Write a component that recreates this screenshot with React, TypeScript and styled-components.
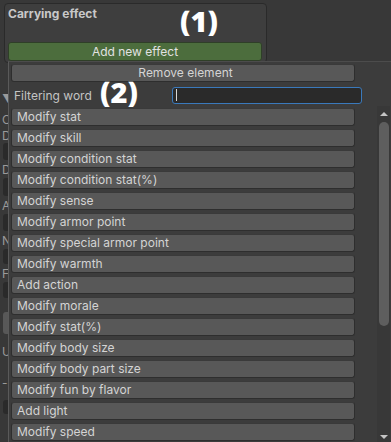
import styled, { createGlobalStyle } from 'styled-components';

const GlobalStyle = createGlobalStyle`
  body {
    margin: 0;
    background: #383838;
    font-family: Inter, 'Noto Sans', sans-serif;
  }
`;

const Screen = styled.div`
  position: relative;
  width: 391px;
  height: 442px;
  overflow: hidden;
  background: #383838;
`;

const TopArea = styled.div`
  height: 61px;
  padding: 3px 0 0 4px;
  box-sizing: border-box;
`;

const Panel = styled.div`
  width: 263px;
  height: 60px;
  box-sizing: border-box;
  border: 1px solid #2a2a2a;
  border-radius: 4px;
  background: #3e3e3e;
  padding: 3px 4px 0 3px;
  display: flex;
  flex-direction: column;
`;

const PanelTitle = styled.div`
  color: #c8c8c8;
  font-size: 12px;
  font-weight: 700;
  line-height: 14px;
  height: 35px;
`;

const GreenButton = styled.div`
  height: 19px;
  box-sizing: border-box;
  background: #4c6d3d;
  border: 1px solid #2f3f28;
  border-radius: 3px;
  color: #e2e2e2;
  font-size: 12px;
  line-height: 17px;
  text-align: center;
`;

const BodyRow = styled.div`
  display: flex;
  height: 381px;
`;

const Backdrop = styled.div`
  width: 8px;
  overflow: hidden;
  display: flex;
  flex-direction: column;
  padding-top: 26px;
`;

const BackRow = styled.div<{ $h: number }>`
  height: ${(p) => p.$h}px;
  display: flex;
  align-items: center;
  color: #9a9a9a;
  font-size: 12px;
  padding-left: 2px;
  white-space: nowrap;
`;

const BackField = styled.div<{ $h: number; $light?: boolean }>`
  height: ${(p) => p.$h}px;
  margin: 2px 0 2px 3px;
  width: 20px;
  border-radius: 3px;
  background: ${(p) => (p.$light ? '#585858' : '#2a2a2a')};
`;

const Popup = styled.div`
  flex: 1;
  display: flex;
  flex-direction: column;
  background: #3c3c3c;
  border-left: 1px solid #5a5a5a;
  border-top: 1px solid #4c4c4c;
  padding: 2px 0 0 2px;
`;

const ItemButton = styled.div<{ $center?: boolean }>`
  width: 344px;
  height: 18px;
  box-sizing: border-box;
  flex-shrink: 0;
  background: #585858;
  border: 1px solid #2e2e2e;
  border-top-color: #3a3a3a;
  border-radius: 3px;
  color: #d4d4d4;
  font-size: 12px;
  line-height: 16px;
  padding-left: 5px;
  text-align: ${(p) => (p.$center ? 'center' : 'left')};
  margin-bottom: 3px;
  white-space: nowrap;
`;

const FilterRow = styled.div`
  display: flex;
  align-items: center;
  height: 22px;
  margin-top: -1px;
`;

const FilterLabel = styled.div`
  width: 158px;
  padding-left: 3px;
  color: #c4c4c4;
  font-size: 12px;
`;

const FilterInput = styled.div`
  width: 190px;
  height: 17px;
  box-sizing: border-box;
  background: #2a2a2a;
  border: 1px solid #3a79bb;
  border-radius: 3px;
  display: flex;
  align-items: center;
  padding-left: 3px;
`;

const Caret = styled.div`
  width: 1px;
  height: 12px;
  background: #d8d8d8;
`;

const ListArea = styled.div`
  display: flex;
  flex: 1;
  min-height: 0;
`;

const List = styled.div`
  display: flex;
  flex-direction: column;
  padding-top: 2px;
  overflow: hidden;
`;

const Scrollbar = styled.div`
  margin-left: 22px;
  width: 13px;
  background: #383838;
  display: flex;
  flex-direction: column;
  align-items: center;
  padding-top: 6px;
`;

const Arrow = styled.div<{ $down?: boolean }>`
  width: 0;
  height: 0;
  border-left: 4px solid transparent;
  border-right: 4px solid transparent;
  ${(p) =>
    p.$down ? 'border-top: 4px solid #c4c4c4;' : 'border-bottom: 4px solid #c4c4c4;'}
`;

const Thumb = styled.div`
  width: 10px;
  height: 204px;
  margin-top: 6px;
  border-radius: 5px;
  background: #5e5e5e;
`;

const Spacer = styled.div`
  flex: 1;
`;

const BottomArrow = styled.div`
  padding-bottom: 3px;
`;

const Marker = styled.div<{ $x: number; $y: number }>`
  position: absolute;
  left: ${(p) => p.$x}px;
  top: ${(p) => p.$y}px;
  color: #ffffff;
  font-family: 'Open Sans', Inter, sans-serif;
  font-size: 29px;
  font-weight: 800;
  line-height: 32px;
`;

const effects = [
  'Modify stat',
  'Modify skill',
  'Modify condition stat',
  'Modify condition stat(%)',
  'Modify sense',
  'Modify armor point',
  'Modify special armor point',
  'Modify warmth',
  'Add action',
  'Modify morale',
  'Modify stat(%)',
  'Modify body size',
  'Modify body part size',
  'Modify fun by flavor',
  'Add light',
  'Modify speed',
];

const App = () => {
  return (
    <Screen>
      <GlobalStyle />
      <TopArea>
        <Panel>
          <PanelTitle>Carrying effect</PanelTitle>
          <GreenButton>Add new effect</GreenButton>
        </Panel>
      </TopArea>
      <BodyRow>
        <Backdrop>
          <BackRow $h={22}>▼</BackRow>
          <BackRow $h={20}>C</BackRow>
          <BackRow $h={12}>D</BackRow>
          <BackField $h={17} />
          <BackRow $h={14}>D</BackRow>
          <BackField $h={18} />
          <BackRow $h={14}>A</BackRow>
          <BackField $h={17} />
          <BackRow $h={14}>N</BackRow>
          <BackField $h={15} />
          <BackRow $h={14}>F</BackRow>
          <BackField $h={16} />
          <BackRow $h={10}> </BackRow>
          <BackField $h={22} $light />
          <BackRow $h={30}>U</BackRow>
          <BackRow $h={32}>-</BackRow>
          <BackField $h={14} />
        </Backdrop>
        <Popup>
          <ItemButton $center>Remove element</ItemButton>
          <FilterRow>
            <FilterLabel>Filtering word</FilterLabel>
            <FilterInput>
              <Caret />
            </FilterInput>
          </FilterRow>
          <ListArea>
            <List>
              {effects.map((e) => (
                <ItemButton key={e}>{e}</ItemButton>
              ))}
            </List>
            <Scrollbar>
              <Arrow />
              <Thumb />
              <Spacer />
              <BottomArrow>
                <Arrow $down />
              </BottomArrow>
            </Scrollbar>
          </ListArea>
        </Popup>
      </BodyRow>
      <Marker $x={180} $y={5}>(1)</Marker>
      <Marker $x={100} $y={76}>(2)</Marker>
    </Screen>
  );
};

export default App;
